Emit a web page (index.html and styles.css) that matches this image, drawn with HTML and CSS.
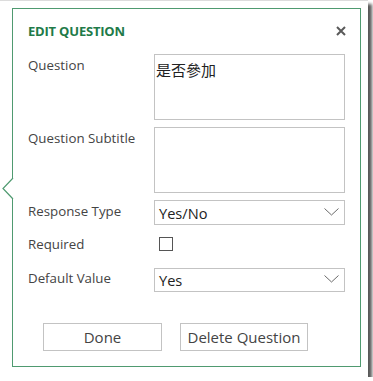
FILE: index.html
```html
<!DOCTYPE html>
<html lang="en">
<head>
  <meta charset="UTF-8" />
  <meta name="viewport" content="width=device-width, initial-scale=1" />
  <title>Edit Question</title>
  <link rel="stylesheet" href="styles.css">
</head>
<body>

  <div class="frame">
    <div class="panel">
      <svg class="pointer" width="12" height="22" viewBox="0 0 12 22">
        <polyline points="11,0 1,10.5 11,21" fill="#fff" stroke="#4f9a70" stroke-width="1.2" />
      </svg>

      <div class="panel-header">
        <div class="panel-title">EDIT QUESTION</div>
        <svg class="close" width="10" height="10" viewBox="0 0 10 10">
          <path d="M1 1 L9 9 M9 1 L1 9" stroke="#5a5a5a" stroke-width="2" />
        </svg>
      </div>

      <div class="row first">
        <div class="label">Question</div>
        <textarea class="field area">是否參加</textarea>
      </div>

      <div class="row">
        <div class="label">Question Subtitle</div>
        <textarea class="field area"></textarea>
      </div>

      <div class="row">
        <div class="label">Response Type</div>
        <div class="field dropdown">
          <span>Yes/No</span>
          <svg width="15" height="8" viewBox="0 0 15 8">
            <polyline points="0.5,0.5 7.5,7 14.5,0.5" fill="none" stroke="#6a6a6a" stroke-width="1" />
          </svg>
        </div>
      </div>

      <div class="row check-row">
        <div class="label">Required</div>
        <span class="checkbox"></span>
      </div>

      <div class="row default-row">
        <div class="label">Default Value</div>
        <div class="field dropdown short">
          <span>Yes</span>
          <svg width="15" height="8" viewBox="0 0 15 8">
            <polyline points="0.5,0.5 7.5,7 14.5,0.5" fill="none" stroke="#6a6a6a" stroke-width="1" />
          </svg>
        </div>
      </div>

      <div class="btn-group">
        <button class="btn done">Done</button>
        <button class="btn delete">Delete Question</button>
      </div>
    </div>
  </div>

</body>
</html>
```

FILE: styles.css
```css
* {
  box-sizing: border-box;
  margin: 0;
  padding: 0;
  font-family: 'Open Sans', 'Noto Sans', sans-serif;
}
body {
  background-color: #fff;
}
.frame {
  width: 368px;
  height: 377px;
  background-color: #fff;
  border-top: 1px solid #dcdcdc;
  box-shadow: 4px 4px 3px rgb(0 0 0 / 0.65);
  padding: 7px 0 0 12px;
}
.panel {
  position: relative;
  width: 349px;
  height: 359px;
  border: 1px solid #4f9a70;
  background-color: #fff;
  padding: 13px 14px 14px 15px;
}
.pointer {
  position: absolute;
  left: -11px;
  top: 169px;
}
.panel-header {
  display: flex;
  justify-content: space-between;
  align-items: center;
  height: 18px;
}
.panel-title {
  font-size: 13px;
  font-weight: 700;
  color: #217a48;
  letter-spacing: -0.2px;
}
.row {
  display: flex;
  margin-top: 7px;
}
.row.first {
  margin-top: 14px;
}
.label {
  width: 126px;
  flex-shrink: 0;
  font-size: 13.3px;
  color: #444;
  padding-top: 2px;
}
.field {
  width: 191px;
  border: 1px solid #c3c3c3;
  background-color: #fff;
  color: #222;
}
.area {
  height: 66px;
  resize: none;
  padding: 4px 1px;
  font-size: 15px;
  font-family: 'Noto Sans CJK TC', 'Noto Sans', sans-serif;
  outline: none;
  display: block;
}
.dropdown {
  height: 25px;
  display: flex;
  align-items: center;
  justify-content: space-between;
  padding: 0 5px 0 4px;
  font-size: 14.6px;
  color: #222;
}
.dropdown svg {
  margin-top: -2px;
}
.dropdown.short {
  height: 24px;
}
.check-row {
  margin-top: 12px;
  height: 14px;
  align-items: center;
}
.check-row .label {
  padding-top: 0;
}
.checkbox {
  width: 14px;
  height: 14px;
  margin-left: 5px;
  border: 1px solid #555;
  background-color: #fff;
}
.default-row {
  margin-top: 17px;
}
.default-row .label {
  padding-top: 1px;
}
.btn-group {
  display: flex;
  gap: 18px;
  margin-top: 31px;
  padding-left: 15px;
}
.btn {
  height: 28px;
  border: 1px solid #c3c3c3;
  background-color: #fff;
  color: #444;
  font-size: 15px;
  cursor: pointer;
}
.btn.done {
  width: 119px;
}
.btn.delete {
  width: 128px;
}
```
